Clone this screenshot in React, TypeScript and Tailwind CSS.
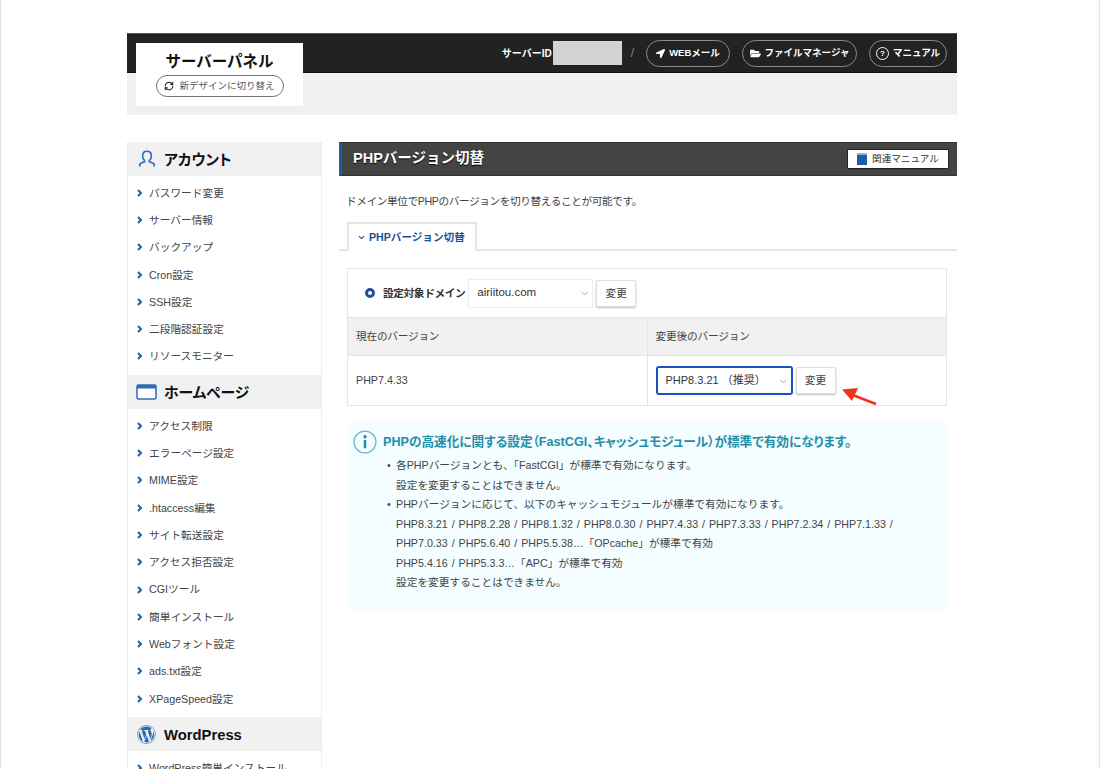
import React from 'react';
import { ChevronDown, RefreshCw } from 'lucide-react';
import { FaWordpress, FaLocationArrow, FaFolderOpen } from 'react-icons/fa';

const FONT = '[font-family:"Liberation_Sans","Noto_Sans_CJK_JP",sans-serif]';

const accountItems = ['パスワード変更', 'サーバー情報', 'バックアップ', 'Cron設定', 'SSH設定', '二段階認証設定', 'リソースモニター'];
const homepageItems = ['アクセス制限', 'エラーページ設定', 'MIME設定', '.htaccess編集', 'サイト転送設定', 'アクセス拒否設定', 'CGIツール', '簡単インストール', 'Webフォント設定', 'ads.txt設定', 'XPageSpeed設定'];
const wordpressItems = ['WordPress簡単インストール'];

const UserIcon = () => (
  <svg width="18" height="18" viewBox="0 0 18 18" fill="none" stroke="#2a6db5" strokeWidth="1.6">
    <path d="M6.6 10.6C5 9.4 4.6 7.600 4.600 5.800 4.600 3 6.400 1.200 9 1.200s4.400 1.800 4.400 4.600c0 1.800-.4 3.600-2 4.800v1.200c1.800.6 4.200 1.400 4.800 2.400v2.200M6.600 10.600v1.200c-1.800.6-4.200 1.400-4.800 2.400v2.200" />
  </svg>
);

const WindowIcon = () => (
  <svg width="21" height="16" viewBox="0 0 21 16" fill="none">
    <rect x="1" y="1" width="19" height="14" rx="1.500" fill="#fff" stroke="#2a6db5" strokeWidth="1.500" />
    <rect x="1" y="1" width="19" height="3.500" fill="#2a6db5" />
  </svg>
);

const Bullet = () => (
  <svg width="6" height="8" viewBox="0 0 6 8" className="shrink-0" fill="none" stroke="#1c5fa8" strokeWidth="2">
    <path d="M1 1l3 3-3 3" />
  </svg>
);

const SideSection = ({ icon, title, items }: { icon: React.ReactNode; title: string; items: string[] }) => (
  <div>
    <div className="h-[34px] bg-[#f1f1f1] flex items-center">
      <div className="w-[36px] flex justify-center pl-[1px]">{icon}</div>
      <h2 className="pt-[2px] text-[14.800px] font-bold text-[#111] [font-feature-settings:'palt']">{title}</h2>
    </div>
    <ul className="pt-[3px] pb-[5px]">
      {items.map((item) => (
        <li key={item} className="h-[27.3px] flex items-center pl-[9px] gap-[6px] text-[10.7px] text-[#444] whitespace-nowrap">
          <Bullet />
          {item}
        </li>
      ))}
    </ul>
  </div>
);

const HeaderButton = ({ icon, label, width }: { icon: React.ReactNode; label: string; width: string }) => (
  <div className={`${width} h-[27px] flex items-center justify-center gap-[4px] rounded-full border border-[#8a8a8a] text-white text-[9.500px] font-bold whitespace-nowrap`}>
    {icon}
    {label}
  </div>
);

const SelectBox = ({ value, className, textSize }: { value: string; className: string; textSize: string }) => (
  <div className={`relative ${className}`}>
    <select defaultValue={value} className={`w-full h-full appearance-none bg-white pl-[8px] ${textSize} text-[#333] outline-none`}>
      <option>{value}</option>
    </select>
    <ChevronDown size={11} strokeWidth={1.2} className="absolute right-[2px] top-[8px] text-[#555] pointer-events-none" />
  </div>
);

const ChangeButton = () => (
  <button className="w-[40px] h-[27px] bg-white rounded-[2px] border border-[#ddd] shadow-[0_1px_2px_rgba(0,0,0,0.25)] text-[10.700px] text-[#444]">変更</button>
);

export default function App() {
  return (
    <div className={`${FONT} h-[769px] overflow-hidden bg-white border-x border-[#e4e4e4] pt-[33px] pl-[126px]`}>
      <div className="w-[830px]">
        <header className="relative h-[82px] bg-[#f0f0f0]">
          <div className="h-[40px] bg-[#222] border-t border-[#555] border-b border-b-[#111] flex items-center justify-end pr-[10px]">
            <span className="text-white text-[10px] font-bold">サーバーID</span>
            <div className="w-[69px] h-[24px] bg-[#d3d3d3] ml-[1px]" />
            <span className="text-[#888] text-[12px] ml-[9px] mr-[12px]">/</span>
            <div className="flex gap-[12px]">
              <HeaderButton width="w-[84px]" icon={<FaLocationArrow size={9} />} label="WEBメール" />
              <HeaderButton width="w-[115px]" icon={<FaFolderOpen size={11} />} label="ファイルマネージャ" />
              <HeaderButton
                width="w-[78px]"
                icon={<span className="w-[13px] h-[13px] rounded-full border border-white text-[8px] leading-[11px] text-center">?</span>}
                label="マニュアル"
              />
            </div>
          </div>
          <div className="absolute left-[9px] top-[10px] w-[167px] h-[63px] bg-white flex flex-col items-center pt-[9px]">
            <div className="text-[15.500px] leading-[20px] font-bold text-[#111]">サーバーパネル</div>
            <div className="mt-[3px] w-[128px] h-[22px] rounded-full border border-[#777] flex items-center justify-center gap-[5px] text-[9.500px] text-[#555]">
              <RefreshCw size={10} strokeWidth={2.6} className="text-[#222]" />
              新デザインに切り替え
            </div>
          </div>
        </header>

        <div className="flex gap-[17px] mt-[27px] items-start">
          <aside className="w-[195px] border-x border-[#eee] shrink-0">
            <SideSection icon={<UserIcon />} title="アカウント" items={accountItems} />
            <SideSection icon={<WindowIcon />} title="ホームページ" items={homepageItems} />
            <SideSection icon={<FaWordpress size={19} color="#2a6db5" />} title="WordPress" items={wordpressItems} />
          </aside>

          <main className="w-[618px]">
            <div className="h-[34px] bg-[#444] border-l-[3px] border-l-[#1c5fa8] border-y border-y-[#333] flex items-center justify-between pl-[11px] pr-[8px]">
              <h1 className="text-white text-[14.500px] font-bold [text-shadow:0_1px_1px_#000]">PHPバージョン切替</h1>
              <div className="w-[102px] h-[20px] bg-white rounded-[1px] border border-[#222] flex items-center justify-center gap-[5px] text-[9.600px] text-[#333]">
                <span className="w-[10px] h-[12px] bg-[#1c5fa8] border-t-2 border-t-[#8db4dc]" />
                関連マニュアル
              </div>
            </div>

            <p className="mt-[18px] ml-[7px] text-[10.700px] leading-[14px] text-[#444] tracking-[-0.43px]">ドメイン単位でPHPのバージョンを切り替えることが可能です。</p>

            <div className="mt-[14px] h-[29px] border-b-2 border-[#e5e5e5] pl-[8px]">
              <div className="w-[130px] h-[29px] bg-white border-2 border-b-0 border-[#e5e5e5] flex items-center pl-[8px] gap-[3px] text-[10.600px] font-bold text-[#1c4f9c]">
                <ChevronDown size={9} strokeWidth={3} />
                PHPバージョン切替
              </div>
            </div>

            <table className="mt-[17px] ml-[8px] w-[600px] table-fixed border-collapse text-[10.700px] text-[#444]">
              <tbody>
                <tr className="h-[49px]">
                  <td colSpan={2} className="border border-[#e5e5e5] pl-[17px]">
                    <div className="flex items-center">
                      <span className="w-[10px] h-[10px] rounded-full border-[3px] border-[#1c4f9c]" />
                      <span className="ml-[8px] font-bold text-[#333] tracking-[-0.4px]">設定対象ドメイン</span>
                      <SelectBox value="airiitou.com" textSize="text-[11.500px]" className="ml-[3px] w-[125px] h-[29px] border border-[#eee]" />
                      <div className="ml-[3px]"><ChangeButton /></div>
                    </div>
                  </td>
                </tr>
                <tr className="h-[38px] bg-[#f1f1f1]">
                  <td className="border border-[#e5e5e5] pl-[8px] pb-[1px] tracking-[-0.25px]">現在のバージョン</td>
                  <td className="border border-[#e5e5e5] pl-[8px] pb-[1px] tracking-[-0.2px]">変更後のバージョン</td>
                </tr>
                <tr className="h-[50px]">
                  <td className="border border-[#e5e5e5] pl-[8px]">PHP7.4.33</td>
                  <td className="border border-[#e5e5e5] pl-[8px]">
                    <div className="flex items-center gap-[3px]">
                      <SelectBox value="PHP8.3.21 （推奨）" textSize="text-[11px]" className="w-[137px] h-[29px] rounded-[3px] border-2 border-[#1c4fc4] overflow-hidden" />
                      <ChangeButton />
                    </div>
                  </td>
                </tr>
              </tbody>
            </table>

            <div className="mt-[16px] ml-[8px] w-[600px] h-[188px] bg-[#f4fdff] pt-[8px] pl-[6px]">
              <div className="flex items-center gap-[6px]">
                <svg width="24" height="24" viewBox="0 0 23 23" fill="none" className="shrink-0">
                  <circle cx="11.500" cy="11.500" r="10.500" stroke="#6fb6cc" strokeWidth="1.200" />
                  <circle cx="11.500" cy="6.500" r="1.600" fill="#1f8fa8" />
                  <rect x="10.300" y="9.500" width="2.400" height="8" fill="#1f8fa8" />
                </svg>
                <h3 className="text-[12.650px] font-bold text-[#1f8fa8] whitespace-nowrap [font-feature-settings:'palt']">PHPの高速化に関する設定（FastCGI、キャッシュモジュール）が標準で有効になります。</h3>
              </div>
              <ul className="mt-[2px] ml-[43px] text-[10.700px] leading-[19.500px] text-[#444]">
                <li className="relative">
                  <span className="absolute left-[-9px] top-[0px]">•</span>
                  各PHPバージョンとも、「FastCGI」が標準で有効になります。
                  <br />
                  設定を変更することはできません。
                </li>
                <li className="relative">
                  <span className="absolute left-[-9px] top-[0px]">•</span>
                  PHPバージョンに応じて、以下のキャッシュモジュールが標準で有効になります。
                  <br />
                  <span className="[word-spacing:1px]">PHP8.3.21 / PHP8.2.28 / PHP8.1.32 / PHP8.0.30 / PHP7.4.33 / PHP7.3.33 / PHP7.2.34 / PHP7.1.33 /</span>
                  <br />
                  <span className="[word-spacing:1px]">PHP7.0.33 / PHP5.6.40 / PHP5.5.38…「OPcache」が標準で有効</span>
                  <br />
                  <span className="[word-spacing:1px]">PHP5.4.16 / PHP5.3.3…「APC」が標準で有効</span>
                  <br />
                  設定を変更することはできません。
                </li>
              </ul>
            </div>

            <svg width="38" height="20" viewBox="0 0 38 20" className="absolute left-[840px] top-[386px]">
              <path d="M36 18L10 8" stroke="#f0321e" strokeWidth="2.500" />
              <path d="M2 3.500L18 2L12 15z" fill="#f0321e" />
            </svg>
          </main>
        </div>
      </div>
    </div>
  );
}
